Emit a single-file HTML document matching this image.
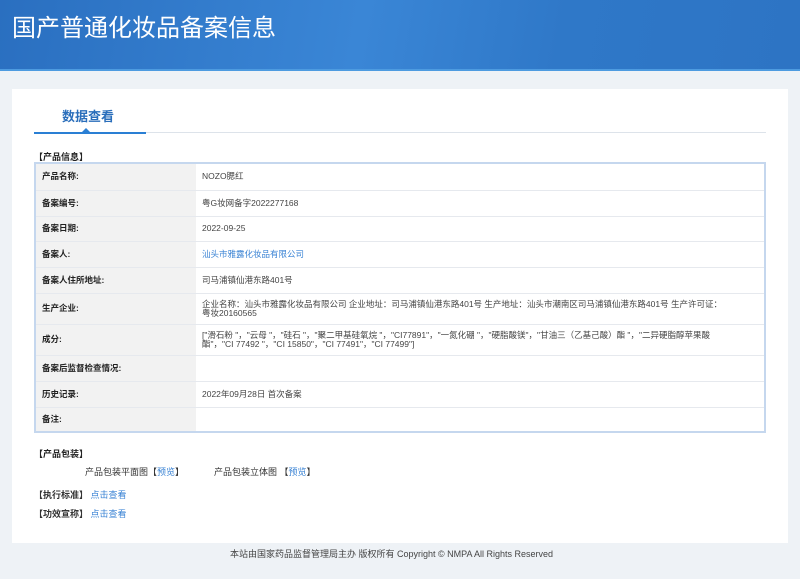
<!DOCTYPE html>
<html><head><meta charset="utf-8"><style>
*{margin:0;padding:0;box-sizing:border-box}
body{width:800px;height:579px;background:#eef2f6;font-family:"Liberation Sans","Noto Sans CJK SC",sans-serif;color:#333;overflow:hidden;position:relative}
.hd{position:absolute;left:0;top:0;width:800px;height:71px;background:linear-gradient(100deg,#2a6fc0 0%,#3a86d6 45%,#2f78c8 70%,#2d74c4 100%);border-bottom:2px solid #4d9be0}
.hd h1{position:absolute;left:12px;top:8px;font-size:24px;font-weight:normal;color:#fff;font-family:"Noto Sans CJK SC",sans-serif}
.card{position:absolute;left:12px;top:89px;width:776px;height:454px;background:#fff}
.tab{position:absolute;left:62px;top:106px;font-size:13px;color:#2a6ebb;font-weight:bold}
.tl{position:absolute;left:34px;top:132px;width:732px;height:1px;background:#dde3ea}
.tb{position:absolute;left:34px;top:132px;width:112px;height:2px;background:#2a7fd4}
.tri{position:absolute;left:82px;top:128px;width:0;height:0;border-left:4px solid transparent;border-right:4px solid transparent;border-bottom:4px solid #2a7fd4}
.sec{position:absolute;font-size:9px;font-weight:bold;color:#222}
table{position:absolute;left:34px;top:162px;width:732px;border-collapse:collapse;border:2px solid #c5d7ee;font-size:8.5px}
td{border-bottom:1px solid #e6e9ee;vertical-align:middle;line-height:9px}
td.l{width:161px;background:#f2f2f2;font-weight:bold;padding-left:6px;color:#222}
td.v{padding-left:6px;padding-right:40px;color:#444}
a{color:#3a83d4;text-decoration:none}
.ft{position:absolute;top:547px;left:230px;font-size:9px;color:#444}
</style></head><body>
<div class="hd"><h1>国产普通化妆品备案信息</h1></div>
<div class="card"></div>
<div class="tab">数据查看</div>
<div class="tl"></div><div class="tb"></div><div class="tri"></div>
<div class="sec" style="left:34px;top:150px">【产品信息】</div>
<table>
<tr style="height:27px"><td class="l">产品名称:</td><td class="v">NOZO腮红</td></tr>
<tr style="height:26px"><td class="l">备案编号:</td><td class="v">粤G妆网备字2022277168</td></tr>
<tr style="height:25px"><td class="l">备案日期:</td><td class="v">2022-09-25</td></tr>
<tr style="height:26px"><td class="l">备案人:</td><td class="v"><a>汕头市雅露化妆品有限公司</a></td></tr>
<tr style="height:26px"><td class="l">备案人住所地址:</td><td class="v">司马浦镇仙港东路401号</td></tr>
<tr style="height:31px"><td class="l">生产企业:</td><td class="v">企业名称：汕头市雅露化妆品有限公司 企业地址：司马浦镇仙港东路401号 生产地址：汕头市潮南区司马浦镇仙港东路401号 生产许可证：<br>粤妆20160565</td></tr>
<tr style="height:31px"><td class="l">成分:</td><td class="v">["滑石粉 "，"云母 "，"硅石 "，"聚二甲基硅氧烷 "，"CI77891"，"一氮化硼 "，"硬脂酸镁"，"甘油三（乙基己酸）酯 "，"二异硬脂醇苹果酸<br>酯"，"CI 77492 "，"CI 15850"，"CI 77491"，"CI 77499"]</td></tr>
<tr style="height:26px"><td class="l">备案后监督检查情况:</td><td class="v"></td></tr>
<tr style="height:26px"><td class="l">历史记录:</td><td class="v">2022年09月28日 首次备案</td></tr>
<tr style="height:25px"><td class="l">备注:</td><td class="v"></td></tr>
</table>
<div class="sec" style="left:34px;top:447px">【产品包装】</div>
<div style="position:absolute;left:85px;top:465px;font-size:9px">产品包装平面图【<a>预览</a>】</div>
<div style="position:absolute;left:214px;top:465px;font-size:9px">产品包装立体图 【<a>预览</a>】</div>
<div style="position:absolute;left:34px;top:488px;font-size:9px"><b>【执行标准】</b> <a>点击查看</a></div>
<div style="position:absolute;left:34px;top:507px;font-size:9px"><b>【功效宣称】</b> <a>点击查看</a></div>
<div class="ft">本站由国家药品监督管理局主办 版权所有 Copyright © NMPA All Rights Reserved</div>
</body></html>
